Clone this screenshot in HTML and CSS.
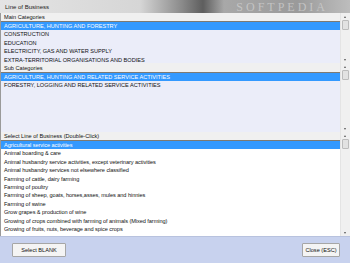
FILE: index.html
```html
<!DOCTYPE html>
<html lang="en">
  <head>
    <meta charset="UTF-8" />
    <title>Line of Business</title>
    <link rel="stylesheet" href="styles.css">
  </head>
  <body>
    <div class="window">
      <div class="title">
        <span>Line of Business</span>
        <span class="watermark">SOFTPEDIA</span>
      </div>

      <!-- main categories -->
      <div class="listbox lb-main">
        <div class="list">
          <div class="list-head">Main Categories</div>
          <div class="row sel">AGRICULTURE, HUNTING AND FORESTRY</div>
          <div class="row">CONSTRUCTION</div>
          <div class="row">EDUCATION</div>
          <div class="row">ELECTRICITY, GAS AND WATER SUPPLY</div>
          <div class="row">EXTRA-TERRITORIAL ORGANISATIONS AND BODIES</div>
        </div>
        <div class="scrollbar">
          <div class="arrow up"></div>
          <div class="thumb"></div>
          <div class="track"></div>
          <div class="arrow down"></div>
        </div>
      </div>

      <!-- sub categories -->
      <div class="listbox lb-sub">
        <div class="list">
          <div class="list-head">Sub Categories</div>
          <div class="row sel">AGRICULTURE, HUNTING AND RELATED SERVICE ACTIVITIES</div>
          <div class="row">FORESTRY, LOGGING AND RELATED SERVICE ACTIVITIES</div>
        </div>
        <div class="scrollbar">
          <div class="arrow up"></div>
          <div class="thumb"></div>
          <div class="track"></div>
          <div class="arrow down"></div>
        </div>
      </div>

      <!-- line of business -->
      <div class="listbox lb-lines">
        <div class="list">
          <div class="list-head">Select Line of Business (Double-Click)</div>
          <div class="row sel">Agricultural service activities</div>
          <div class="row">Animal boarding &amp; care</div>
          <div class="row">Animal husbandry service activities, except veterinary activities</div>
          <div class="row">Animal husbandry services not elsewhere classified</div>
          <div class="row">Farming of cattle, dairy farming</div>
          <div class="row">Farming of poultry</div>
          <div class="row">Farming of sheep, goats, horses,asses, mules and hinnies</div>
          <div class="row">Farming of swine</div>
          <div class="row">Grow grapes &amp; production of wine</div>
          <div class="row">Growing of crops combined with farming of animals (Mixed farming)</div>
          <div class="row">Growing of fruits, nuts, beverage and spice crops</div>
        </div>
        <div class="scrollbar">
          <div class="arrow up"></div>
          <div class="thumb"></div>
          <div class="track"></div>
          <div class="arrow down"></div>
        </div>
      </div>

      <div class="footer">
        <button class="btn btn-blank">Select BLANK</button>
        <button class="btn btn-close">Close (ESC)</button>
      </div>
    </div>
  </body>
</html>
```

FILE: styles.css
```css
body {
  margin: 0;
  font-family: "Liberation Sans", Arial, sans-serif;
  font-size: 5.6px;
  color: #111;
  background-color: #d4d0c8;
}

.window {
  width: 350px;
  height: 263px;
  display: flex;
  flex-direction: column;
  overflow: hidden;
}

.title {
  height: 13px;
  display: flex;
  align-items: center;
  justify-content: space-between;
  padding-left: 5px;
  box-sizing: border-box;
  font-size: 6px;
  color: #222;
  background: linear-gradient(90deg, #e4e4e4 0%, #d6d6d6 40%, #8a8a8a 52%, #5e5e5e 58%, #a8a8a8 64%, #9a9a9a 85%, #bdbdbd 100%);
  overflow: hidden;
}

.watermark {
  font-family: "Liberation Serif", serif;
  font-size: 12px;
  line-height: 12px;
  letter-spacing: 3px;
  color: #d2d2d2;
  margin-right: 22px;
  opacity: 0.7;
}

/* list boxes */

.listbox {
  display: flex;
  border-left: 1px solid #9a9a9a;
  background-color: #ebedf9;
}

.lb-main {
  height: 50px;
}

.lb-sub {
  height: 69px;
}

.lb-lines {
  height: 104px;
  background-color: #fff;
}

.list {
  flex: 1;
  overflow: hidden;
}

.list-head {
  height: 8px;
  line-height: 8px;
  padding-left: 3px;
  background-color: #f0f0f0;
  border-bottom: 1px solid #7e7a72;
}

.lb-sub .list-head {
  height: 9px;
  line-height: 10px;
}

.lb-lines .list-head {
  height: 8px;
  line-height: 9px;
}

.row {
  height: 8.4px;
  line-height: 8.4px;
  padding-left: 3px;
  white-space: nowrap;
}

.lb-lines .row {
  letter-spacing: -0.06px;
}

.row.sel {
  background-color: #3399ff;
  color: #fff;
}

/* scrollbars */

.scrollbar {
  width: 9px;
  display: flex;
  flex-direction: column;
  background-color: #f0f0f0;
  border-left: 1px solid #e4e4e4;
}

.arrow {
  height: 7px;
  position: relative;
}

.arrow::after {
  content: "";
  position: absolute;
  left: 3px;
  border-left: 1.5px solid transparent;
  border-right: 1.5px solid transparent;
}

.arrow.up::after {
  top: 3px;
  border-bottom: 2px solid #555;
}

.arrow.down::after {
  top: 3px;
  border-top: 2px solid #555;
}

.thumb {
  height: 8px;
  margin: 0 1px;
  background-color: #e2e2e2;
  border: 1px solid #bcbcbc;
  border-radius: 1px;
}

.track {
  flex: 1;
}

/* bottom bar */

.footer {
  flex: 1;
  display: flex;
  align-items: center;
  justify-content: space-between;
  padding: 0 10px 1px 12px;
  background-color: #c8d2ee;
  border-top: 1px solid #b8c2de;
}

.btn {
  font-family: "Liberation Sans", Arial, sans-serif;
  font-size: 5.6px;
  height: 14px;
  padding: 0;
  background-color: #f4f4f4;
  border: 1px solid #a6a6a6;
  border-radius: 1px;
  color: #111;
}

.btn-blank {
  width: 54px;
}

.btn-close {
  width: 38px;
}
```
